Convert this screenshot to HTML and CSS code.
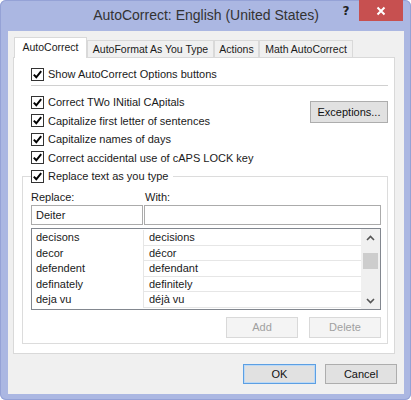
FILE: index.html
```html
<!DOCTYPE html>
<html>
<head>
<meta charset="utf-8">
<link rel="stylesheet" href="styles.css">
</head>
<body>
<div class="window">
  <div class="titlebar">
    <div></div>
    <div class="title">AutoCorrect: English (United States)</div>
    <div class="controls">
      <span class="help">?</span>
      <span class="close"><svg width="10" height="10" viewBox="0 0 10 10"><path d="M1.5 1.5 L8.5 8.5 M8.5 1.5 L1.5 8.5" stroke="#fff" stroke-width="2" fill="none"/></svg></span>
    </div>
  </div>
  <div class="client">
    <div class="tabs">
      <div class="tab active">AutoCorrect</div>
      <div class="tab w-format">AutoFormat As You Type</div>
      <div class="tab w-actions">Actions</div>
      <div class="tab w-math">Math AutoCorrect</div>
    </div>
    <div class="panel">
      <div class="check-row indent"><svg class="cb" width="13" height="13" viewBox="0 0 13 13"><rect x="0.5" y="0.5" width="12" height="12" fill="#fff" stroke="#333"/><path d="M2.8 6.6 L5.3 9.3 L10.2 3.2" fill="none" stroke="#000" stroke-width="2"/></svg><span>Show AutoCorrect Options buttons</span></div>
      <div class="sep"></div>
      <div class="options">
        <div class="opt-list">
          <div class="check-row opt"><svg class="cb" width="13" height="13" viewBox="0 0 13 13"><rect x="0.5" y="0.5" width="12" height="12" fill="#fff" stroke="#333"/><path d="M2.8 6.6 L5.3 9.3 L10.2 3.2" fill="none" stroke="#000" stroke-width="2"/></svg><span>Correct TWo INitial CApitals</span></div>
          <div class="check-row opt"><svg class="cb" width="13" height="13" viewBox="0 0 13 13"><rect x="0.5" y="0.5" width="12" height="12" fill="#fff" stroke="#333"/><path d="M2.8 6.6 L5.3 9.3 L10.2 3.2" fill="none" stroke="#000" stroke-width="2"/></svg><span>Capitalize first letter of sentences</span></div>
          <div class="check-row opt"><svg class="cb" width="13" height="13" viewBox="0 0 13 13"><rect x="0.5" y="0.5" width="12" height="12" fill="#fff" stroke="#333"/><path d="M2.8 6.6 L5.3 9.3 L10.2 3.2" fill="none" stroke="#000" stroke-width="2"/></svg><span>Capitalize names of days</span></div>
          <div class="check-row opt"><svg class="cb" width="13" height="13" viewBox="0 0 13 13"><rect x="0.5" y="0.5" width="12" height="12" fill="#fff" stroke="#333"/><path d="M2.8 6.6 L5.3 9.3 L10.2 3.2" fill="none" stroke="#000" stroke-width="2"/></svg><span>Correct accidental use of cAPS LOCK key</span></div>
        </div>
        <div class="btn exceptions">Exceptions...</div>
      </div>
      <fieldset class="group">
        <legend class="check-row"><svg class="cb" width="13" height="13" viewBox="0 0 13 13"><rect x="0.5" y="0.5" width="12" height="12" fill="#fff" stroke="#333"/><path d="M2.8 6.6 L5.3 9.3 L10.2 3.2" fill="none" stroke="#000" stroke-width="2"/></svg><span>Replace text as you type</span></legend>
        <div class="rw-grid">
          <div class="lbl">Replace:</div>
          <div class="lbl with">With:</div>
          <div class="input">Deiter</div>
          <div class="input"></div>
        </div>
        <div class="list">
          <div class="list-body">
            <div class="c1">decisons</div><div class="c2">decisions</div>
            <div class="c1">decor</div><div class="c2">décor</div>
            <div class="c1">defendent</div><div class="c2">defendant</div>
            <div class="c1">definately</div><div class="c2">definitely</div>
            <div class="c1">deja vu</div><div class="c2">déjà vu</div>
          </div>
          <div class="scrollbar">
            <div class="arrow"><svg width="9" height="6" viewBox="0 0 9 6"><path d="M1 5 L4.5 1.5 L8 5" fill="none" stroke="#555" stroke-width="1.6"/></svg></div>
            <div class="thumb"></div>
            <div class="arrow down"><svg width="9" height="6" viewBox="0 0 9 6"><path d="M1 1 L4.5 4.5 L8 1" fill="none" stroke="#555" stroke-width="1.6"/></svg></div>
          </div>
        </div>
        <div class="group-buttons">
          <div class="btn disabled">Add</div>
          <div class="btn disabled">Delete</div>
        </div>
      </fieldset>
    </div>
    <div class="dialog-buttons">
      <div class="btn default">OK</div>
      <div class="btn cancel">Cancel</div>
    </div>
  </div>
</div>
</body>
</html>
```
FILE: styles.css
```css
html, body {
  margin: 0;
  padding: 0;
  background: #fff;
}
.window {
  width: 411px;
  height: 400px;
  box-sizing: border-box;
  padding: 0 7px 6px 8px;
  background: #abb7e2;
  border-radius: 6px;
  box-shadow: inset 0 0 0 1px #95a2d6;
  display: flex;
  flex-direction: column;
  font-family: "Liberation Sans", Arial, sans-serif;
  font-size: 11px;
  color: #1a1a1a;
}
.titlebar {
  height: 31px;
  flex: none;
  display: grid;
  grid-template-columns: 1fr auto 1fr;
  align-items: start;
}
.title {
  font-size: 14px;
  color: #333;
  line-height: 30px;
  white-space: nowrap;
}
.controls {
  justify-self: end;
  display: flex;
  align-items: flex-start;
  margin-right: 1px;
}
.help {
  width: 14px;
  margin-right: 6px;
  margin-top: 4px;
  text-align: center;
  font-weight: bold;
  font-size: 12px;
  color: #222;
  font-family: "DejaVu Sans", sans-serif;
}
.close {
  width: 44px;
  height: 21px;
  background: #c75050;
  display: flex;
  align-items: center;
  justify-content: center;
}
.close svg { display: block; }
.client {
  flex: 1;
  background: #f0f0f0;
  padding-top: 6px;
  display: flex;
  flex-direction: column;
}
.tabs {
  display: flex;
  align-items: flex-end;
  height: 21px;
  padding-left: 6px;
  margin-bottom: -1px;
  position: relative;
  z-index: 1;
  font-size: 10.5px;
}
.tab {
  box-sizing: border-box;
  height: 17px;
  margin-bottom: 1px;
  border: 1px solid #d9d9d9;
  border-bottom: none;
  background: #f0f0f0;
  text-align: center;
  line-height: 16px;
  white-space: nowrap;
}
.tab.active {
  width: 73px;
  height: 21px;
  margin-bottom: 0;
  background: #fff;
  line-height: 19px;
}
.w-format { width: 127px; }
.w-actions { width: 45px; }
.w-math { width: 94px; }
.panel {
  margin-left: 5px;
  width: 382px;
  height: 297px;
  box-sizing: border-box;
  border: 1px solid #d9d9d9;
  background: #fff;
  padding: 7px 6px 0 8px;
}
.check-row {
  display: flex;
  align-items: center;
  height: 18px;
  white-space: nowrap;
}
.check-row .cb {
  flex: none;
  margin-right: 4px;
  display: block;
}
.indent { padding-left: 9px; }
.sep {
  height: 1px;
  background: #d0d0d0;
  margin: 2px 0 0 9px;
}
.options {
  display: flex;
  justify-content: space-between;
  align-items: flex-start;
  margin-top: 7px;
  padding-left: 9px;
}
.opt { height: 18.5px; }
.btn {
  box-sizing: border-box;
  border: 1px solid #adadad;
  background: #e1e1e1;
  text-align: center;
  color: #111;
  white-space: nowrap;
}
.exceptions {
  width: 78px;
  height: 22px;
  line-height: 20px;
  margin-top: 8px;
}
.group {
  margin: 0;
  min-width: 0;
  border: 1px solid #dcdcdc;
  padding: 0 6px 5px 8px;
}
.group legend {
  padding: 0 5px 0 0;
  margin: 0;
}
.rw-grid {
  display: grid;
  grid-template-columns: 112px 1fr;
  column-gap: 1px;
  margin-top: 5px;
}
.lbl {
  height: 15px;
  line-height: 14px;
}
.lbl.with { padding-left: 1px; }
.input {
  box-sizing: border-box;
  height: 20px;
  border: 1px solid #ababab;
  background: #fff;
  padding-left: 4px;
  line-height: 18px;
}
.list {
  margin-top: 3px;
  height: 82px;
  box-sizing: border-box;
  border: 1px solid #82878f;
  display: flex;
}
.list-body {
  flex: 1;
  display: grid;
  grid-template-columns: 112px 1fr;
  grid-auto-rows: 15.5px;
  align-content: start;
  padding-top: 1px;
}
.c1, .c2 {
  box-sizing: border-box;
  line-height: 14px;
  white-space: nowrap;
}
.c1 {
  padding-left: 4px;
  border-right: 1px solid #e6e6e6;
}
.c2 {
  padding-left: 5px;
  border-bottom: 1px solid #e6e6e6;
}
.scrollbar {
  width: 19px;
  background: #f0f0f0;
  display: flex;
  flex-direction: column;
  align-items: center;
}
.arrow {
  height: 17px;
  display: flex;
  align-items: center;
  justify-content: center;
}
.arrow svg { display: block; }
.arrow.down { margin-top: auto; }
.thumb {
  width: 15px;
  height: 16px;
  margin-top: 7px;
  background: #cdcdcd;
}
.group-buttons {
  display: flex;
  justify-content: flex-end;
  gap: 11px;
  margin-top: 7px;
}
.btn.disabled {
  width: 72px;
  height: 21px;
  line-height: 19px;
  background: #f4f4f4;
  border-color: #d9d9d9;
  color: #a0a0a0;
}
.dialog-buttons {
  display: flex;
  justify-content: flex-end;
  gap: 9px;
  margin-top: 10px;
  padding-right: 7px;
}
.btn.default {
  width: 73px;
  height: 20px;
  line-height: 18px;
  border-color: #5c9fe3;
  box-shadow: inset 0 0 0 1px #bcd9f5;
}
.btn.cancel {
  width: 72px;
  height: 20px;
  line-height: 18px;
}
```
